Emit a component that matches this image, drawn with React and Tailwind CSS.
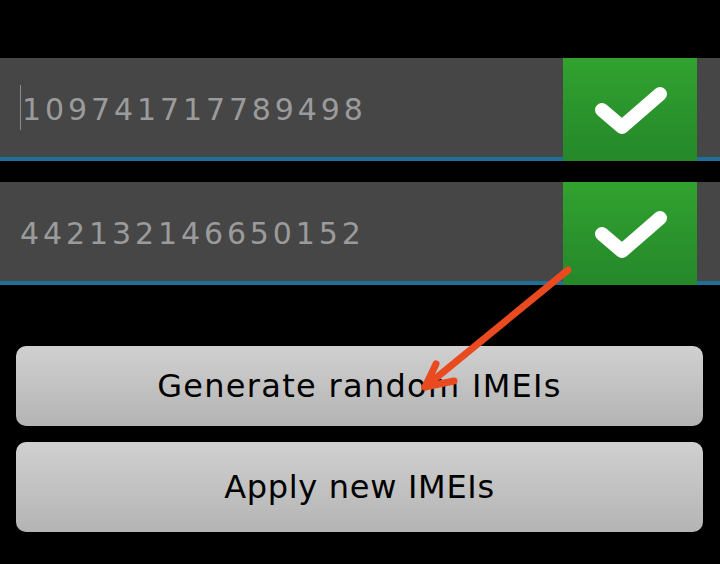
import React from "react";

const font = { fontFamily: "'DejaVu Sans', 'Liberation Sans', sans-serif" };

// Green confirm tile with a rounded white tick
const CheckTile = () => (
  <div className="w-[134px] shrink-0 flex items-center justify-center bg-gradient-to-b from-[#31a22f] to-[#25882a]">
    <svg width="134" height="103" viewBox="0 0 134 103">
      <path
        d="M39 52 L59 69 L97 36"
        fill="none"
        stroke="#fff"
        strokeWidth="14"
        strokeLinecap="round"
        strokeLinejoin="round"
      />
    </svg>
  </div>
);

const ImeiRow = ({ value, cursor }) => (
  <div className="flex h-[103px]">
    <div className="flex-1 flex items-center bg-[#464646] border-b-4 border-[#1f7099] pl-[20px]">
      {cursor && <div className="w-px h-[45px] bg-[#8a8a8a] mr-px" />}
      <span
        className="text-[30px] text-[#9b9b9b] tracking-[3.9px] leading-none pt-[4px]"
        style={font}
      >
        {value}
      </span>
    </div>
    <CheckTile />
    <div className="w-[23px] bg-[#464646] border-b-4 border-[#1f7099]" />
  </div>
);

const GreyButton = ({ label, h, track }) => (
  <button
    className={`${h} ${track} w-full rounded-[10px] bg-gradient-to-b from-[#d0d0d0] to-[#b4b4b4] text-black text-[32px] flex items-center justify-center`}
    style={font}
  >
    {label}
  </button>
);

export default function App() {
  return (
    <div className="relative w-[720px] h-[564px] bg-black overflow-hidden pt-[58px]">
      <ImeiRow value="109741717789498" cursor />
      <div className="h-[21px]" />
      <ImeiRow value="442132146650152" />

      <div className="px-[16px] pr-[17px] mt-[61px] flex flex-col gap-[16px]">
        <GreyButton label="Generate random IMEIs" h="h-[80px]" track="tracking-[1.3px]" />
        <GreyButton label="Apply new IMEIs" h="h-[90px]" track="tracking-[0.7px]" />
      </div>

      {/* annotation arrow drawn over the screenshot */}
      <svg className="absolute left-0 top-0 pointer-events-none" width="720" height="564">
        <g stroke="#ea4a1f" strokeWidth="7" strokeLinecap="round" fill="none">
          <path d="M568 270 L425 387" />
          <path d="M436 364 L425 387 L454 381" strokeLinejoin="round" />
        </g>
      </svg>
    </div>
  );
}
